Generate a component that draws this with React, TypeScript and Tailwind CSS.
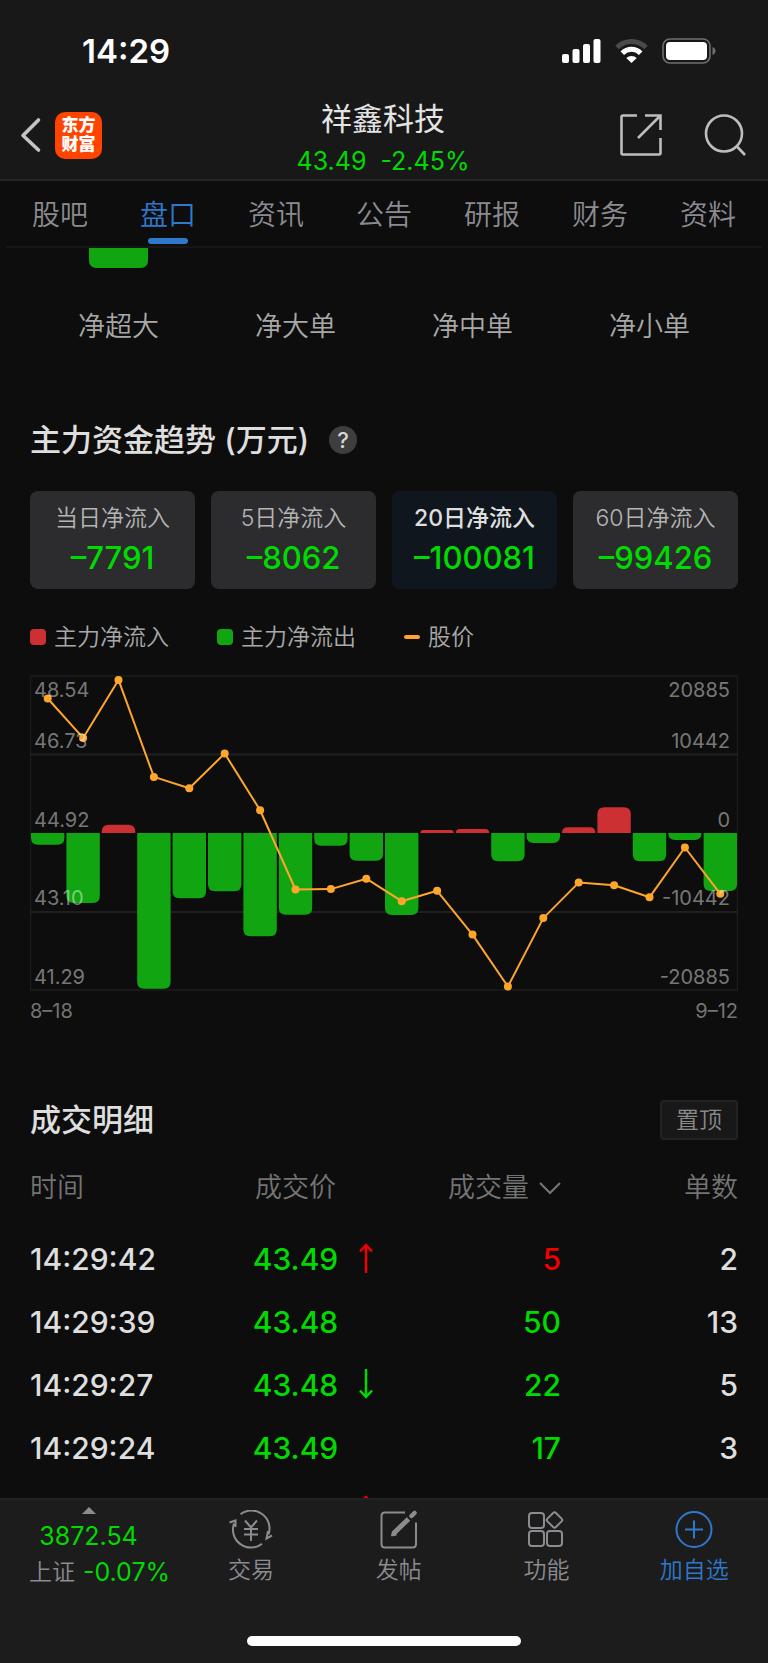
import { useState } from 'react'
import type { ReactNode } from 'react'
import clsx from 'clsx'

type Trend = 'up' | 'down'

interface Deal {
  time: string
  price: string
  trend?: Trend
  volume: string
  buy?: boolean
  count: string
}

const tabs = ['股吧', '盘口', '资讯', '公告', '研报', '财务', '资料']
const orderSizes = ['净超大', '净大单', '净中单', '净小单']

const periods = [
  { label: '当日净流入', value: '–7791' },
  { label: '5日净流入', value: '–8062' },
  { label: '20日净流入', value: '–100081' },
  { label: '60日净流入', value: '–99426' },
]

const deals: Deal[] = [
  { time: '14:29:42', price: '43.49', trend: 'up', volume: '5', buy: true, count: '2' },
  { time: '14:29:39', price: '43.48', volume: '50', count: '13' },
  { time: '14:29:27', price: '43.48', trend: 'down', volume: '22', count: '5' },
  { time: '14:29:24', price: '43.49', volume: '17', count: '3' },
  { time: '', price: '', trend: 'up', volume: '', count: '' },
]

// 近20日主力净流入（万元）与收盘价
const flows = [
  -1552, -9312, 1109, -20708, -8691, -7760, -13746, -10864, -1685, -3680,
  -10908, 399, 532, -3769, -1330, 754, 3414, -3769, -931, -7716,
]
const prices = [
  48.02, 47.11, 48.45, 46.21, 45.95, 46.75, 45.44, 43.61, 43.62, 43.86,
  43.34, 43.58, 42.57, 41.37, 42.95, 43.77, 43.71, 43.43, 44.58, 43.51,
]

const CHART_W = 708
const CHART_H = 316
const STEP = CHART_W / flows.length
const MID = CHART_H / 2
const PLOT = CHART_H - 2
const MAX_FLOW = 20885
const MAX_PRICE = 48.54
const MIN_PRICE = 41.29

const priceY = (p: number) => 1 + ((MAX_PRICE - p) / (MAX_PRICE - MIN_PRICE)) * PLOT
const dotX = (i: number) => STEP * i + STEP / 2

const axis = [
  { y: 22, left: '48.54', right: '20885' },
  { y: 73, left: '46.73', right: '10442' },
  { y: 152, left: '44.92', right: '0' },
  { y: 230, left: '43.10', right: '-10442' },
  { y: 309, left: '41.29', right: '-20885' },
]

function barPath(i: number, flow: number) {
  const x = STEP * i + 1
  const w = STEP - 2
  const h = (Math.abs(flow) / MAX_FLOW) * (PLOT / 2)
  const r = Math.min(7, h)
  const s = flow < 0 ? 1 : -1
  const end = MID + s * h
  return `M${x} ${MID}V${end - s * r}Q${x} ${end} ${x + r} ${end}H${x + w - r}Q${x + w} ${end} ${x + w} ${end - s * r}V${MID}Z`
}

function TrendChart() {
  return (
    <svg viewBox={`0 0 ${CHART_W} ${CHART_H}`} className="block w-full" role="img" aria-label="主力资金趋势">
      <rect x="0.500" y="1" width={CHART_W - 1} height={PLOT} fill="none" stroke="#1c1c1c" strokeWidth="1.5" />
      <path d={`M0 79.500H${CHART_W}M0 237H${CHART_W}`} stroke="#202020" strokeWidth="2" />
      {flows.map((flow, i) => (
        <path key={i} d={barPath(i, flow)} fill={flow < 0 ? '#12a512' : '#cd3032'} />
      ))}
      <polyline
        points={prices.map((p, i) => `${dotX(i)},${priceY(p)}`).join(' ')}
        fill="none"
        stroke="#fea52c"
        strokeWidth="2"
        strokeLinejoin="round"
      />
      {prices.map((p, i) => (
        <circle key={i} cx={dotX(i)} cy={priceY(p)} r="4" fill="#fea52c" />
      ))}
      <g fill="#fff" fillOpacity="0.45" fontSize="20">
        {axis.map((a) => (
          <g key={a.y}>
            <text x="4" y={a.y}>{a.left}</text>
            <text x="700" y={a.y} textAnchor="end">{a.right}</text>
          </g>
        ))}
      </g>
    </svg>
  )
}

function StatusBar() {
  return (
    <div className="flex h-[91px] items-center justify-between pt-[11px] pr-[52px] pl-[82px]">
      <span className="text-[33px] leading-10 font-semibold text-white">14:29</span>
      <div className="flex items-center gap-[14px]">
        <svg width="39" height="24" viewBox="0 0 39 24" fill="#fff">
          <rect y="15" width="7" height="9" rx="2" />
          <rect x="10.500" y="10" width="7" height="14" rx="2" />
          <rect x="21" y="5" width="7" height="19" rx="2" />
          <rect x="31.500" width="7" height="24" rx="2" />
        </svg>
        <svg width="33" height="24" viewBox="0 0 33 24" fill="none">
          <path d="M2 8.500C10 .6 23 .6 31 8.500" stroke="#4a4a4a" strokeWidth="5" />
          <path d="M7.300 14.200C12.500 9 20.500 9 25.700 14.200" stroke="#fff" strokeWidth="5" />
          <path d="M11.300 19C14 16.300 19 16.300 21.700 19L16.500 24Z" fill="#fff" />
        </svg>
        <svg width="54" height="26" viewBox="0 0 54 26">
          <rect x="1" y="1" width="47" height="24" rx="7" fill="none" stroke="#6f6f6f" strokeWidth="1.600" />
          <rect x="4" y="4" width="41" height="18" rx="4" fill="#fff" />
          <path d="M50.500 9C54.500 10.500 54.500 15.500 50.500 17Z" fill="#6f6f6f" />
        </svg>
      </div>
    </div>
  )
}

function TitleBar() {
  return (
    <div className="grid h-[88px] grid-cols-[1fr_auto_1fr] items-center pr-[22px] pl-5">
      <div className="flex items-center gap-[13px]">
        <button aria-label="返回">
          <svg width="22" height="36" viewBox="0 0 22 36" fill="none" stroke="#c4c4c4" strokeWidth="3.600" strokeLinecap="round" strokeLinejoin="round">
            <path d="M18.500 3 3 18.500 18.500 33" />
          </svg>
        </button>
        <a href="#home" className="flex size-[47px] flex-col items-center justify-center rounded-[10px] bg-[#ff4400] text-[17px] leading-[19px] font-black text-white">
          <span>东方</span>
          <span>财富</span>
        </a>
      </div>
      <div className="pt-2 text-center">
        <h1 className="text-[31px] leading-10 font-normal text-[#e4e4e4]">祥鑫科技</h1>
        <p className="mt-1 text-[25px] leading-9 whitespace-pre text-[#00da00]">43.49  -2.45%</p>
      </div>
      <div className="flex items-center justify-end gap-[42px]">
        <button aria-label="分享">
          <svg width="42" height="42" viewBox="0 0 42 42" fill="none" stroke="#bdbdbd" strokeWidth="2.600">
            <path d="M17 1.500H3Q1.500 1.500 1.500 3V39Q1.500 40.500 3 40.500H39Q40.500 40.500 40.500 39V24M25 1.500H40.500V16M40 2 18 24" />
          </svg>
        </button>
        <button aria-label="搜索">
          <svg width="42" height="42" viewBox="0 0 42 42" fill="none" stroke="#bdbdbd" strokeWidth="2.600">
            <circle cx="20" cy="19.500" r="18" />
            <path d="M32.500 32 41 41" />
          </svg>
        </button>
      </div>
    </div>
  )
}

function TrendArrow({ trend }: { trend: Trend }) {
  return (
    <svg
      width="14"
      height="30"
      viewBox="0 0 14 30"
      fill="none"
      stroke={trend === 'up' ? '#f00000' : '#00da00'}
      strokeWidth="2.500"
      className={clsx('absolute top-[15px] right-[11px]', trend === 'down' && 'rotate-180')}
    >
      <path d="M7 30V2M1 8.500 7 2 13 8.500" />
    </svg>
  )
}

function NavItem({ label, active, children }: { label: string; active?: boolean; children: ReactNode }) {
  return (
    <button className={clsx('flex flex-1 flex-col items-center pt-[10px]', active ? 'text-[#2f78cc]' : 'text-[#8b8b90]')}>
      <svg width="44" height="40" viewBox="0 0 44 40" fill="none" stroke="currentColor" strokeWidth="2">
        {children}
      </svg>
      <span className="mt-[2px] text-[23px] leading-9 font-[350]">{label}</span>
    </button>
  )
}

export default function App() {
  const [tab, setTab] = useState('盘口')
  const [period, setPeriod] = useState('20日净流入')

  return (
    <div className="min-h-screen bg-[#0d0d0d] font-[Inter,'Noto_Sans_CJK_SC',sans-serif]">
      <header className="border-b-2 border-[#262626] bg-[#181818]">
        <StatusBar />
        <TitleBar />
      </header>

      <nav className="mx-[6px] flex h-[67px] border-b-2 border-[#171717]">
        {tabs.map((t) => (
          <button
            key={t}
            onClick={() => setTab(t)}
            className={clsx('relative flex-1 pt-[3px] text-[28px] font-[350]', t === tab ? 'text-[#2f78cc]' : 'text-[#8b8b90]')}
          >
            {t}
            {t === tab && <span className="absolute bottom-[2px] left-1/2 h-[6px] w-10 -translate-x-1/2 rounded-full bg-[#2f78cc]" />}
          </button>
        ))}
      </nav>

      <main className="px-[30px]">
        {/* 资金柱状图底部 */}
        <div className="grid grid-cols-4">
          {orderSizes.map((name, i) => (
            <div key={name} className="flex flex-col items-center">
              <div className={clsx('h-5 w-[59px] rounded-b-[7px]', i === 0 && 'bg-[#12a512]')} />
              <span className="mt-[39px] text-[27px] leading-10 font-[350] text-[#a8a8a8]">{name}</span>
            </div>
          ))}
        </div>

        <section className="mt-[73px]">
          <div className="flex items-center gap-5">
            <h2 className="text-[31px] leading-10 font-medium text-[#dedede]">主力资金趋势 (万元)</h2>
            <button aria-label="说明" className="size-7 rounded-full bg-[#3e3e3e] text-[22px] leading-7 font-medium text-[#d6d6d6]">?</button>
          </div>

          <div className="mt-[31px] grid grid-cols-4 gap-4">
            {periods.map((p) => (
              <button
                key={p.label}
                onClick={() => setPeriod(p.label)}
                className={clsx(
                  'flex h-[98px] flex-col items-center rounded-lg pt-[9px]',
                  p.label === period ? 'bg-[#10161e]' : 'bg-[#2c2c2e]',
                )}
              >
                <span className={clsx('text-[23px] leading-9', p.label === period ? 'font-medium text-[#dedede]' : 'font-[350] text-[#b4b4b4]')}>
                  {p.label}
                </span>
                <span className="mt-[2px] text-[31px] leading-10 font-medium text-[#00da00]">{p.value}</span>
              </button>
            ))}
          </div>

          <div className="mt-[30px] flex items-center text-[23px] leading-9 font-[350] text-[#a8a8a8]">
            <span className="flex w-[187px] items-center gap-2">
              <i className="size-4 rounded bg-[#cd3032]" />
              主力净流入
            </span>
            <span className="flex w-[187px] items-center gap-2">
              <i className="size-4 rounded bg-[#12a512]" />
              主力净流出
            </span>
            <span className="flex items-center gap-2">
              <i className="h-1 w-4 rounded-full bg-[#fea52c]" />
              股价
            </span>
          </div>

          <div className="mt-5">
            <TrendChart />
          </div>
          <div className="mt-1 flex justify-between text-[20px] leading-8 text-[#747474]">
            <span>8–18</span>
            <span>9–12</span>
          </div>
        </section>

        <section className="mt-[73px]">
          <div className="flex items-center justify-between">
            <h2 className="text-[31px] leading-10 font-medium text-[#dedede]">成交明细</h2>
            <button className="h-10 rounded border-2 border-[#232323] bg-[#181818] px-[14px] text-[23px] leading-9 font-[350] text-[#8a8a8a]">置顶</button>
          </div>

          <table className="mt-[18px] w-full table-fixed">
            <thead>
              <tr className="h-[70px] text-[27px] text-[#747474]">
                <th className="pb-[10px] text-left font-[350]">时间</th>
                <th className="pb-[10px] text-center font-[350]">成交价</th>
                <th className="pb-[10px] font-[350]">
                  <button className="flex w-full items-center justify-end gap-[10px]">
                    成交量
                    <svg width="22" height="14" viewBox="0 0 22 14" fill="none" stroke="currentColor" strokeWidth="2.200">
                      <path d="M1 2 11 12 21 2" />
                    </svg>
                  </button>
                </th>
                <th className="pb-[10px] text-right font-[350]">单数</th>
              </tr>
            </thead>
            <tbody className="text-[30px] font-medium text-[#dedede]">
              {deals.map((d, i) => (
                <tr key={i} className="h-[63px]">
                  <td>{d.time}</td>
                  <td className="relative text-center text-[#00da00]">
                    {d.price}
                    {d.trend && <TrendArrow trend={d.trend} />}
                  </td>
                  <td className={clsx('text-right', d.buy ? 'text-[#f00000]' : 'text-[#00da00]')}>{d.volume}</td>
                  <td className="text-right">{d.count}</td>
                </tr>
              ))}
            </tbody>
          </table>
        </section>
      </main>

      <footer className="fixed inset-x-0 bottom-0 h-[165px] border-t-2 border-[#222222] bg-[#1c1c1c]">
        <div className="flex">
          <button className="flex w-[177px] flex-col items-center pt-[7px] text-[25px] text-[#00da00]">
            <svg width="14" height="7" viewBox="0 0 14 7" fill="#8b8b90">
              <path d="M0 7 7 0 14 7Z" />
            </svg>
            <span className="mt-[5px] leading-[35px]">3872.54</span>
            <span className="flex gap-2 pl-[22px] leading-9">
              <span className="text-[23px] font-[350] text-[#8b8b90]">上证</span>
              -0.07%
            </span>
          </button>
          <NavItem label="交易">
            <path d="M11.500 4.300A18 18 0 0 1 39.500 24.500M33 33.800A18 18 0 0 1 5 13.500M.5 12.500 6.500 10.500V17M43 25.500 37.500 28.500 39 21" />
            <path d="M16 10.500 22 17.500 28 10.500M15 19H29M15 24.500H29M22 17.500V31" />
          </NavItem>
          <NavItem label="发帖">
            <path d="M28 2.500H8Q4.500 2.500 4.500 6V34Q4.500 37.500 8 37.500H35.500Q39 37.500 39 34V12.500" />
            <path d="M31.500 9 17 23" strokeWidth="5" />
            <path d="M14.500 26 15.500 21 19.500 25Z" fill="currentColor" strokeWidth="1" />
            <path d="M34.500 6 37.500 3" strokeWidth="4.500" strokeLinecap="round" />
          </NavItem>
          <NavItem label="功能">
            <rect x="5" y="3" width="15" height="15" rx="3" />
            <rect x="5" y="21" width="15" height="15" rx="3" />
            <rect x="23" y="21" width="15" height="15" rx="3" />
            <rect x="24.500" y="4" width="12" height="12" rx="2" transform="rotate(45 30.500 10)" />
          </NavItem>
          <NavItem label="加自选" active>
            <circle cx="22" cy="19.500" r="17.500" />
            <path d="M22 10.500V28.500M13 19.500H31" />
          </NavItem>
        </div>
        <div className="absolute bottom-[17px] left-1/2 h-[10px] w-[274px] -translate-x-1/2 rounded-full bg-white" />
      </footer>
    </div>
  )
}
